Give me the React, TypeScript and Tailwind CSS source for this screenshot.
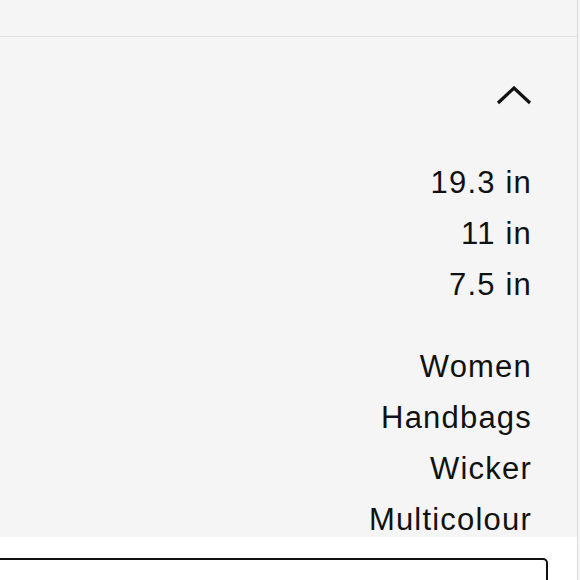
export default function App() {
  const dims = ['19.3 in', '11 in', '7.5 in'];
  const info = ['Women', 'Handbags', 'Wicker', 'Multicolour'];
  return (
    <div className="w-[580px] h-[580px] overflow-hidden flex bg-[#f5f5f5] text-[#111]" style={{ fontFamily: '"Liberation Sans", Arial, sans-serif' }}>
      <div className="w-[577px] flex flex-col shrink-0">
        <div className="h-[37px] shrink-0 border-b border-[#e1e1e1]" />
        <div className="h-[500px] shrink-0 flex flex-col items-end pr-[46px]">
          <button className="mt-[49px] mr-[-1px]" aria-label="Collapse">
            <svg width="36" height="19" viewBox="0 0 36 19" fill="none">
              <path d="M2 17 L18 2 L34 17" stroke="#111" strokeWidth="3.2" />
            </svg>
          </button>
          <div className="mt-[58px] flex flex-col items-end gap-[11px]">
            {dims.map(d => (
              <span key={d} className="text-[31px] leading-[40px] tracking-[1.2px] mr-[-1px]">{d}</span>
            ))}
          </div>
          <div className="mt-[42px] flex flex-col items-end gap-[11px]">
            {info.map(d => (
              <span key={d} className="text-[31px] leading-[40px] tracking-[1.2px] mr-[-1px]">{d}</span>
            ))}
          </div>
        </div>
        <div className="flex-1 bg-white pt-[21px]">
          <div className="ml-[-10px] w-[558px] h-[60px] border-2 border-[#111] rounded-[5px]" />
        </div>
      </div>
      <div className="w-px shrink-0 bg-[#d9d9d9]" />
    </div>
  );
}
